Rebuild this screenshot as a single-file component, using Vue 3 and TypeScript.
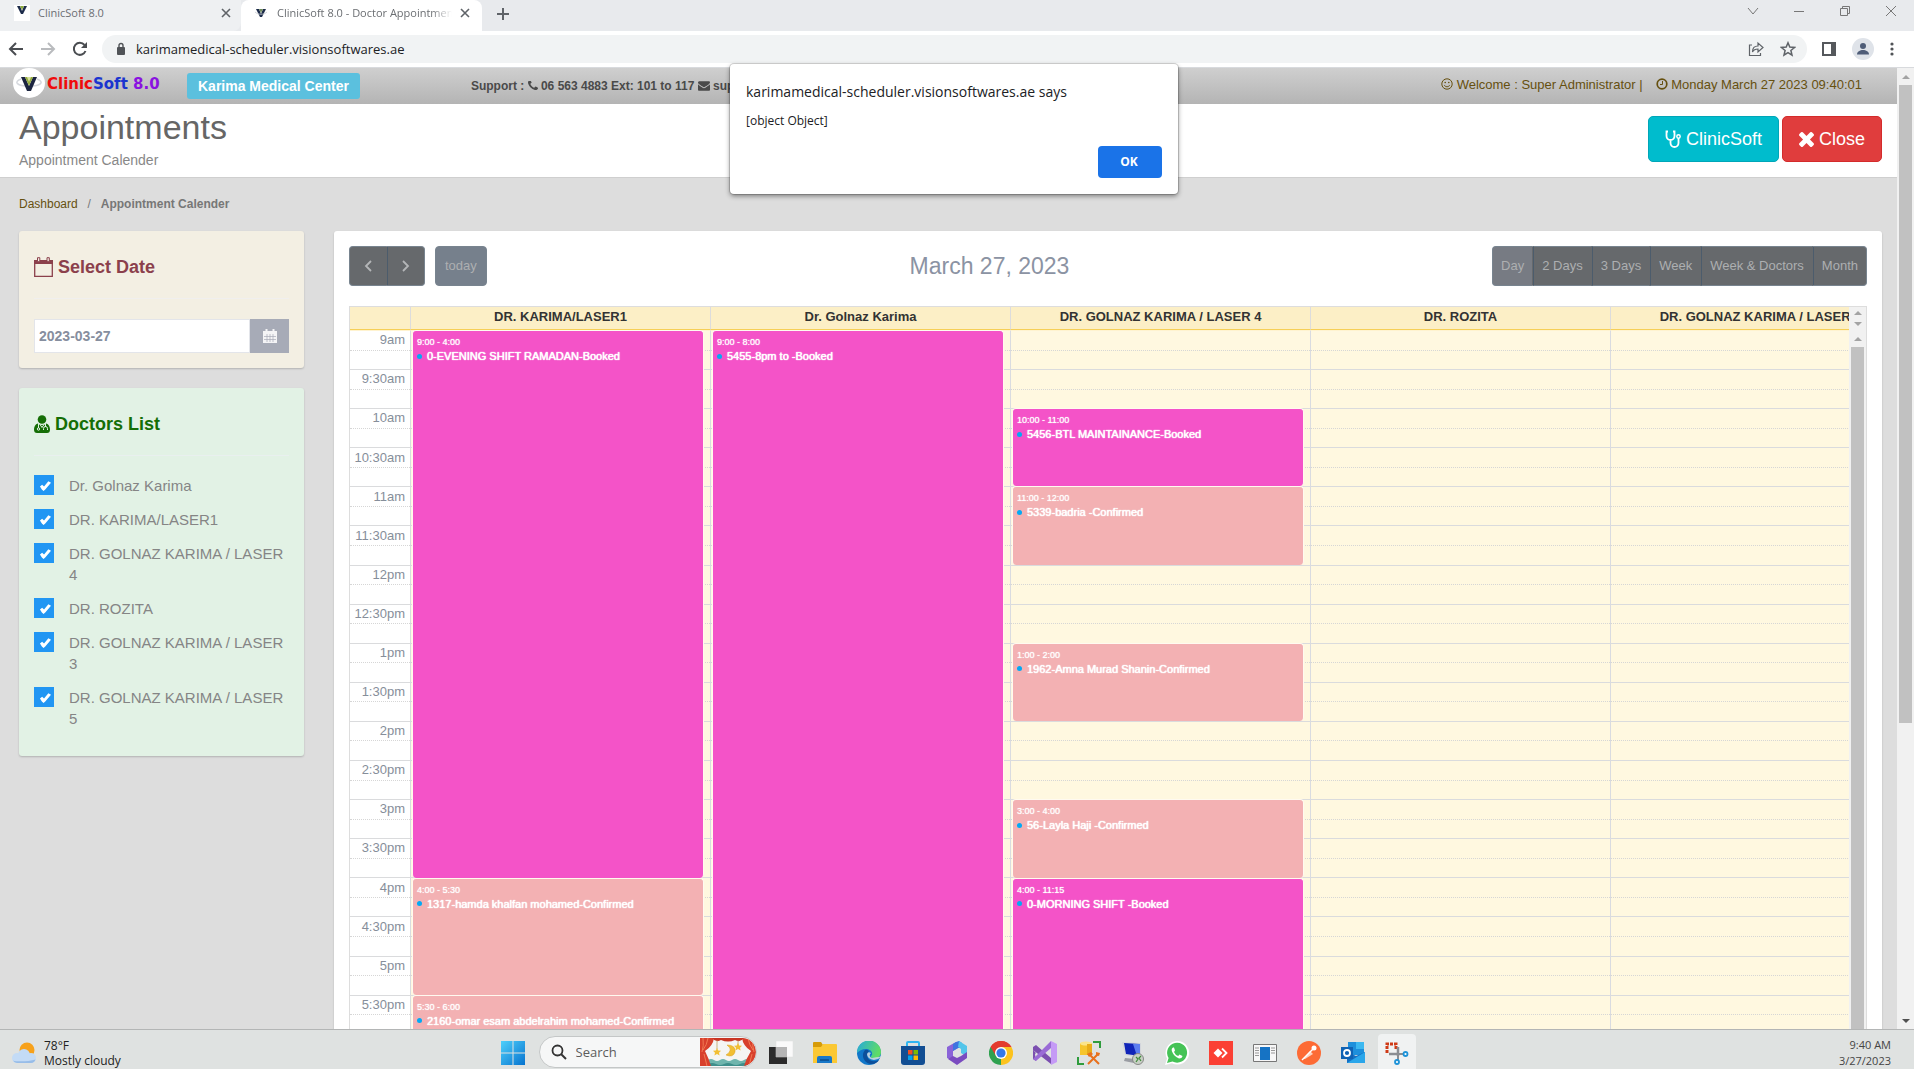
<script setup lang="ts">
import { ref } from 'vue'

interface Appointment {
  start: number
  end: number
  time: string
  title: string
  status: 'booked' | 'confirmed'
}
interface Resource {
  name: string
  items: Appointment[]
}

const DAY_START = 9 * 60
const DAY_LENGTH = 9 * 60

const resources: Resource[] = [
  {
    name: 'DR. KARIMA/LASER1',
    items: [
      { start: 540, end: 960, time: '9:00 - 4:00', title: '0-EVENING SHIFT RAMADAN-Booked', status: 'booked' },
      { start: 960, end: 1050, time: '4:00 - 5:30', title: '1317-hamda khalfan mohamed-Confirmed', status: 'confirmed' },
      { start: 1050, end: 1080, time: '5:30 - 6:00', title: '2160-omar esam abdelrahim mohamed-Confirmed', status: 'confirmed' },
    ],
  },
  {
    name: 'Dr. Golnaz Karima',
    items: [{ start: 540, end: 1200, time: '9:00 - 8:00', title: '5455-8pm to -Booked', status: 'booked' }],
  },
  {
    name: 'DR. GOLNAZ KARIMA / LASER 4',
    items: [
      { start: 600, end: 660, time: '10:00 - 11:00', title: '5456-BTL MAINTAINANCE-Booked', status: 'booked' },
      { start: 660, end: 720, time: '11:00 - 12:00', title: '5339-badria -Confirmed', status: 'confirmed' },
      { start: 780, end: 840, time: '1:00 - 2:00', title: '1962-Amna Murad Shanin-Confirmed', status: 'confirmed' },
      { start: 900, end: 960, time: '3:00 - 4:00', title: '56-Layla Haji -Confirmed', status: 'confirmed' },
      { start: 960, end: 1395, time: '4:00 - 11:15', title: '0-MORNING SHIFT -Booked', status: 'booked' },
    ],
  },
  { name: 'DR. ROZITA', items: [] },
  { name: 'DR. GOLNAZ KARIMA / LASER 3', items: [] },
]

const slots: string[] = []
for (let m = DAY_START; m < DAY_START + DAY_LENGTH; m += 30) {
  const h = Math.floor(m / 60)
  const label = (h > 12 ? h - 12 : h) + (m % 60 ? ':30' : '') + (h < 12 ? 'am' : 'pm')
  slots.push(label, '')
}

function place(a: Appointment) {
  return {
    top: ((a.start - DAY_START) / DAY_LENGTH) * 100 + '%',
    height: ((a.end - a.start) / DAY_LENGTH) * 100 + '%',
  }
}

const doctors = ref([
  { name: 'Dr. Golnaz Karima', on: true },
  { name: 'DR. KARIMA/LASER1', on: true },
  { name: 'DR. GOLNAZ KARIMA / LASER 4', on: true },
  { name: 'DR. ROZITA', on: true },
  { name: 'DR. GOLNAZ KARIMA / LASER 3', on: true },
  { name: 'DR. GOLNAZ KARIMA / LASER 5', on: true },
])
const date = ref('2023-03-27')
const views = ['Day', '2 Days', '3 Days', 'Week', 'Week & Doctors', 'Month']
const view = ref('Day')
</script>

<template>
  <div class="screen">
    <nav class="tabs" aria-label="Browser tabs">
      <div class="tab first">
        <svg class="fav boxed" viewBox="0 0 16 16"><path d="M3 1h3l2 5 2-5h3L9 9H7z" fill="#1c2b4a" /><path d="M6 1h4L8 5z" fill="#8aa83c" /></svg>
        <span class="tab-title">ClinicSoft 8.0</span>
        <button class="bare" aria-label="Close tab"><svg width="10" height="10" viewBox="0 0 10 10"><path d="M1 1l8 8M9 1L1 9" stroke="#5f6368" stroke-width="1.6" /></svg></button>
      </div>
      <div class="tab active">
        <svg class="fav" viewBox="0 0 16 16"><path d="M3 4h3l2 5 2-5h3l-4 8H7z" fill="#1c2b4a" /><path d="M6 4h4L8 8z" fill="#6f8a5c" /><path d="M2 7c3 3 9 3 12 0" fill="none" stroke="#c8ccd2" stroke-width=".8" /></svg>
        <span class="tab-title fade">ClinicSoft 8.0 - Doctor Appointment</span>
        <button class="bare" aria-label="Close tab"><svg width="10" height="10" viewBox="0 0 10 10"><path d="M1 1l8 8M9 1L1 9" stroke="#5f6368" stroke-width="1.6" /></svg></button>
      </div>
      <button class="bare plus" aria-label="New tab"><svg width="12" height="12" viewBox="0 0 12 12"><path d="M6 0v12M0 6h12" stroke="#5f6368" stroke-width="2" /></svg></button>
      <div class="win">
        <button class="bare" aria-label="Search tabs"><svg width="12" height="12" viewBox="0 0 12 12"><path d="M1 3l5 6 5-6" fill="none" stroke="#777" /></svg></button>
        <button class="bare" aria-label="Minimize"><svg width="12" height="12" viewBox="0 0 12 12"><path d="M1 6.500h10" stroke="#777" /></svg></button>
        <button class="bare" aria-label="Restore"><svg width="12" height="12" viewBox="0 0 12 12"><path d="M1.500 3.500h7v7h-7zM3.500 3V1.500h7v7H9" fill="none" stroke="#777" /></svg></button>
        <button class="bare" aria-label="Close window"><svg width="12" height="12" viewBox="0 0 12 12"><path d="M1 1l10 10M11 1L1 11" stroke="#777" /></svg></button>
      </div>
    </nav>

    <div class="toolbar">
      <button class="bare" aria-label="Back"><svg width="16" height="16" viewBox="0 0 16 16"><path d="M15 8H2M8 2L2 8l6 6" fill="none" stroke="#4a4d51" stroke-width="2" /></svg></button>
      <button class="bare" aria-label="Forward"><svg width="16" height="16" viewBox="0 0 16 16"><path d="M1 8h13M8 2l6 6-6 6" fill="none" stroke="#b9bbbe" stroke-width="2" /></svg></button>
      <button class="bare" aria-label="Reload"><svg width="16" height="16" viewBox="0 0 16 16"><path d="M13.500 10A6 6 0 1 1 12.500 4" fill="none" stroke="#4a4d51" stroke-width="2" /><path d="M15 1v6H9z" fill="#4a4d51" /></svg></button>
      <div class="omnibox">
        <svg width="10" height="14" viewBox="0 0 10 14"><rect x="1" y="5" width="8" height="8" rx="1" fill="#505357" /><path d="M3 5V3.500a2 2 0 0 1 4 0V5" fill="none" stroke="#505357" stroke-width="1.400" /></svg>
        <input class="url" value="karimamedical-scheduler.visionsoftwares.ae" aria-label="Address" />
        <button class="bare" aria-label="Share"><svg width="16" height="16" viewBox="0 0 16 16"><path d="M4 4H1.500v10.500h11V12" fill="none" stroke="#5f6368" stroke-width="1.200" /><path d="M4.500 11c0-4 2-6 5.500-6V2l5 4.500-5 4.500V8c-3 0-4.500 1-5.500 3z" fill="none" stroke="#5f6368" stroke-width="1.200" /></svg></button>
        <button class="bare" aria-label="Bookmark"><svg width="16" height="16" viewBox="0 0 16 16"><path d="M8 1.800l1.800 4.300 4.700.4-3.600 3 1.100 4.600L8 11.600l-4 2.500 1.100-4.600-3.600-3 4.700-.4z" fill="none" stroke="#5f6368" stroke-width="1.500" /></svg></button>
      </div>
      <button class="bare" aria-label="Side panel"><svg width="14" height="14" viewBox="0 0 14 14"><path d="M1 1h12v12H1z" fill="none" stroke="#55585c" stroke-width="2" /><path d="M9 1h4v12H9z" fill="#55585c" /></svg></button>
      <button class="bare" aria-label="Profile"><svg width="22" height="22" viewBox="0 0 22 22"><circle cx="11" cy="11" r="11" fill="#dfe3e9" /><circle cx="11" cy="8" r="3" fill="#4f5d78" /><path d="M5 16.500c0-6 12-6 12 0z" fill="#4f5d78" /></svg></button>
      <button class="bare" aria-label="Menu"><svg width="4" height="14" viewBox="0 0 4 14"><circle cx="2" cy="2" r="1.600" fill="#505357" /><circle cx="2" cy="7" r="1.600" fill="#505357" /><circle cx="2" cy="12" r="1.600" fill="#505357" /></svg></button>
    </div>

    <div class="viewport">
      <main class="page">
        <header class="topbar">
          <svg class="logo" width="32" height="30" viewBox="0 0 32 30"><ellipse cx="16" cy="15" rx="16" ry="15" fill="#fff" /><path d="M8 11c-8 3-4 7 8 7s16-4 8-7" fill="none" stroke="#d5d8dd" stroke-width="1.500" /><path d="M8 9h4l4 9 4-9h4l-6 14h-4z" fill="#1b2440" /><path d="M12 9h8l-4 9z" fill="#94ab3d" /><path d="M14 9h4l-2 5z" fill="#d9e3a0" /></svg>
          <span class="brand"><b class="c1">Clinic</b><b class="c2">Soft</b> <b class="c3">8.0</b></span>
          <span class="badge">Karima Medical Center</span>
          <span class="support">Support :
            <svg width="10" height="10" viewBox="192 256 1408 1408"><path fill="currentColor" d="M1600 1240q0 27-10 70.500t-21 68.500q-21 50-122 106-94 51-186 51-27 0-53-3.500t-57.500-12.500-47-14.500-55.500-20.500-49-18q-98-35-175-83-127-79-264-216t-216-264q-48-77-83-175-3-9-18-49t-20.500-55.500-14.500-47-12.500-57.500-3.500-53q0-92 51-186 56-101 106-122 25-11 68.500-21t70.500-10q14 0 21 3 18 6 53 76 11 19 30 54t35 63.500 31 53.500q3 4 17.500 25t21.500 35.500 7 28.500q0 20-28.500 50t-62 55-62 53-28.500 46q0 9 5 22.500t8.500 20.500 14 24 11.500 19q76 137 174 235t235 174q2 1 19 11.500t24 14 20.500 8.500 22.500 5q18 0 46-28.500t53-62 55-62 50-28.500q14 0 28.500 7t35.500 21.500 25 17.500q25 15 53.500 31t63.500 35 54 30q70 35 76 53 3 7 3 21z" /></svg>
            06 563 4883 Ext: 101 to 117
            <svg width="12" height="10" viewBox="0 256 1792 1408"><path fill="currentColor" d="M1792 710v794q0 66-47 113t-113 47h-1472q-66 0-113-47t-47-113v-794q44 49 101 87 362 246 497 345 57 42 92.500 65.500t94.500 48 110 24.500h2q51 0 110-24.500t94.500-48 92.500-65.500q170-123 498-345 57-39 100-87zm0-294q0 79-49 151t-122 123q-376 261-468 325-10 7-42.500 31t-54 38.500-52 32.500-57.500 27-50 9h-2q-23 0-50-9t-57.500-27-52-32.500-54-38.500-42.500-31q-91-64-262-182.500t-205-142.500q-62-42-117-115.500t-55-136.500q0-78 41.500-130t118.500-52h1472q65 0 112.500 47t47.500 113z" /></svg>
            support</span>
          <span class="who">
            <svg width="12" height="12" viewBox="0 0 12 12"><circle cx="6" cy="6" r="5.200" fill="none" stroke="currentColor" /><circle cx="4.200" cy="4.500" r=".8" fill="currentColor" /><circle cx="7.800" cy="4.500" r=".8" fill="currentColor" /><path d="M3.300 7.200c1 2 4.400 2 5.400 0" fill="none" stroke="currentColor" /></svg>
            Welcome : Super Administrator |</span>
          <span class="who">
            <svg width="12" height="12" viewBox="0 0 12 12"><circle cx="6" cy="6" r="4.800" fill="none" stroke="currentColor" stroke-width="1.700" /><path d="M6.500 3v3.500H4" fill="none" stroke="currentColor" /></svg>
            Monday March 27 2023 09:40:01</span>
        </header>

        <section class="title">
          <div>
            <h1>Appointments</h1>
            <p>Appointment Calender</p>
          </div>
          <div class="actions">
            <button class="big teal">
              <svg width="16" height="18" viewBox="0 0 16 18"><path d="M3 1.500H1.500V6a4 4 0 0 0 8 0V1.500H8M5.500 10v3a4 4 0 0 0 8 0V8" fill="none" stroke="#fff" stroke-width="1.800" /><circle cx="13.500" cy="6.500" r="1.700" fill="none" stroke="#fff" stroke-width="1.500" /></svg>
              ClinicSoft
            </button>
            <button class="big red">
              <svg width="15" height="15" viewBox="302 366 1188 1188"><path fill="#fff" d="M1490 1322q0 40-28 68l-136 136q-28 28-68 28t-68-28l-294-294-294 294q-28 28-68 28t-68-28l-136-136q-28-28-28-68t28-68l294-294-294-294q-28-28-28-68t28-68l136-136q28-28 68-28t68 28l294 294 294-294q28-28 68-28t68 28l136 136q28 28 28 68t-28 68l-294 294 294 294q28 28 28 68z" /></svg>
              Close
            </button>
          </div>
        </section>

        <nav class="crumbs" aria-label="Breadcrumb"><a href="#">Dashboard</a><span class="sep">/</span><b>Appointment Calender</b></nav>

        <div class="columns">
          <aside class="side">
            <section class="card date">
              <h2>
                <svg width="19" height="20" viewBox="0 0 19 20"><path d="M.7 4h17.600v15.300H.7z" fill="none" stroke="currentColor" stroke-width="1.300" /><path d="M0 3h19v4H0z" fill="currentColor" /><path d="M3.500.7h2.300v4H3.500zM13 .7h2.300v4H13z" fill="#f3efe3" stroke="currentColor" /></svg>
                <label for="day">Select Date</label>
              </h2>
              <hr />
              <div class="picker">
                <input id="day" v-model="date" />
                <button aria-label="Open calendar">
                  <svg width="14" height="14" viewBox="0 0 14 14"><path d="M0 2h14v12H0zM2.500 0h2v3h-2zM9.500 0h2v3h-2z" fill="#f4f4f6" /><path d="M1 7.500h12M1 10.500h12M4 5v8M7 5v8M10 5v8" stroke="#a7abb7" stroke-width=".7" /></svg>
                </button>
              </div>
            </section>
            <section class="card docs">
              <h2>
                <svg width="16" height="18" viewBox="0 0 16 18"><circle cx="8" cy="4.500" r="4.300" fill="currentColor" /><path d="M3.500 8.500C1 9.500 0 12 0 14.500 0 17 1 18 3 18h10c2 0 3-1 3-3.500 0-2.500-1-5-3.500-6-3 2-6 2-9 0z" fill="currentColor" /><path d="M4.500 9v4M11.500 9v3M9.500 15v-1.500a2 2 0 0 1 4 0V15M6 9.500l2 3 2-3" fill="none" stroke="#e2f2e5" /><circle cx="4.500" cy="14" r="1.200" fill="none" stroke="#e2f2e5" /></svg>
                Doctors List
              </h2>
              <hr />
              <ul>
                <li v-for="d in doctors" :key="d.name">
                  <label><input type="checkbox" v-model="d.on" /><span>{{ d.name }}</span></label>
                </li>
              </ul>
            </section>
          </aside>

          <section class="card cal">
            <div class="calbar">
              <div class="left">
                <div class="group">
                  <button aria-label="Previous"><svg width="8" height="12" viewBox="0 0 8 12"><path d="M7 1L2 6l5 5" fill="none" stroke="#b4b6b8" stroke-width="1.800" /></svg></button>
                  <button aria-label="Next"><svg width="8" height="12" viewBox="0 0 8 12"><path d="M1 1l5 5-5 5" fill="none" stroke="#b4b6b8" stroke-width="1.800" /></svg></button>
                </div>
                <button class="today">today</button>
              </div>
              <h2>March 27, 2023</h2>
              <div class="group views">
                <button v-for="v in views" :key="v" :class="{ on: v === view }" @click="view = v">{{ v }}</button>
              </div>
            </div>

            <div class="grid">
              <div class="headrow">
                <div class="clip">
                  <table class="sheet head">
                    <colgroup><col class="axis-col" /><col v-for="r in resources" :key="r.name" class="res-col" /></colgroup>
                    <thead><tr><th></th><th v-for="r in resources" :key="r.name" scope="col">{{ r.name }}</th></tr></thead>
                  </table>
                </div>
                <div class="bar mini"><i class="up"></i><i class="down"></i></div>
              </div>
              <div class="bodyrow">
                <div class="clip">
                  <table class="sheet body">
                    <colgroup><col class="axis-col" /><col v-for="r in resources" :key="r.name" class="res-col" /></colgroup>
                    <tbody>
                      <tr v-for="(s, i) in slots" :key="i" :class="{ minor: !s }">
                        <th class="axis" scope="row"><span>{{ s }}</span></th>
                        <td v-for="r in resources" :key="r.name"></td>
                      </tr>
                    </tbody>
                  </table>
                  <div class="events">
                    <div v-for="r in resources" :key="r.name" class="lane">
                      <article v-for="a in r.items" :key="a.title" class="event" :class="a.status" :style="place(a)">
                        <time>{{ a.time }}</time>
                        <p>{{ a.title }}</p>
                      </article>
                    </div>
                  </div>
                </div>
                <div class="bar"><i class="up"></i><div class="thumb"></div></div>
              </div>
            </div>
          </section>
        </div>
      </main>
      <div class="bar outer"><i class="up"></i><div class="thumb"></div><i class="down dark"></i></div>
    </div>

    <footer class="taskbar">
      <button class="weather">
        <svg width="28" height="22" viewBox="0 0 28 22"><circle cx="15" cy="8" r="7.500" fill="#f7a11a" /><g fill="#c3dbf6"><circle cx="5" cy="16" r="5" /><circle cx="12" cy="13" r="6" /><circle cx="19" cy="16" r="5" /><path d="M5 13h14v8H5z" /></g><path d="M1 18.500c4 1.500 16 1 22.500-1A5 5 0 0 1 19 21H5a5 5 0 0 1-4-2.500z" fill="#98bde8" /></svg>
        <span>78°F<br />Mostly cloudy</span>
      </button>
      <div class="apps">
        <button class="app" aria-label="Start"><svg viewBox="0 0 24 24"><defs><linearGradient id="w" x1="0" y1="0" x2="1" y2="1"><stop offset="0" stop-color="#4fd0fb" /><stop offset="1" stop-color="#0673cf" /></linearGradient></defs><path d="M0 0h11.500v11.500H0zM12.500 0H24v11.500H12.500zM0 12.500h11.500V24H0zM12.500 12.500H24V24H12.500z" fill="url(#w)" /></svg></button>
        <div class="search">
          <svg width="16" height="16" viewBox="0 0 16 16"><circle cx="6.500" cy="6.500" r="5" fill="none" stroke="#333" stroke-width="1.800" /><path d="M10 10l5 5" stroke="#333" stroke-width="2" /></svg>
          <input placeholder="Search" aria-label="Search" />
          <svg class="art" width="56" height="28" viewBox="0 0 56 28"><path d="M0 0h56v28H0z" fill="#f5f5f3" /><path d="M8 28V22q3-2 6 0t6 0 6 0 6 0 6 0 6 0 4 0v6z" fill="#6fb5ad" /><path d="M8 28v-2q4-2 8 0t8 0 8 0 8 0 8 0v2z" fill="#3f8f8b" /><path d="M0 0h14q-1 8-9 13 4 8 6 15H0z" fill="#d8402c" /><path d="M56 0H42q1 8 9 13-5 8-7 15h12z" fill="#d8402c" /><path d="M12 0h32q-4 5-9 2-7 3-14 0-5 3-9-2z" fill="#c93524" /><path d="M3 0q1 8-1 14M8 0Q7 7 3 12M4 16l3 12M53 0q-1 8 1 14M48 0q1 7 5 12M52 16l-3 12" stroke="#f07a54" fill="none" /><path d="M27 7q7 5-1 10 7 3 9-3 1-7-8-7z" fill="#f2bf33" stroke="#d99e22" stroke-width=".5" /><path d="M17 2v9M38 2v5" stroke="#b99a50" stroke-width=".7" /><path d="M17 10l1.200 2.500 2.800.3-2 1.900.6 2.800-2.600-1.400-2.600 1.400.6-2.800-2-1.900 2.800-.3zM38 5l1.200 2.500 2.800.3-2 1.900.6 2.800-2.600-1.400-2.600 1.400.6-2.800-2-1.900 2.800-.3z" fill="#f2bf33" /></svg>
        </div>
        <button class="app" aria-label="Task view"><svg viewBox="0 0 24 24"><path d="M0 6h18v17H0z" fill="#2b2b2b" /><path d="M7 0h17v16H7z" fill="#fafafa" stroke="#ddd" stroke-width=".5" /><path d="M7 6h11v10H7z" fill="#b5b5b5" /></svg></button>
        <button class="app" aria-label="File Explorer"><svg viewBox="0 0 24 24"><path d="M0 2q0-1 1-1h7l2 3v3H0z" fill="#d69b08" /><path d="M0 6h8l2-3h13q1 0 1 1v18H0z" fill="#fbc834" /><path d="M4 22v-5q0-2 2-2h11q2 0 2 2v5z" fill="#1878c8" /><path d="M7 19h9" stroke="#0a4c8c" stroke-width="1.500" /></svg></button>
        <button class="app" aria-label="Edge"><svg viewBox="0 0 24 24"><defs><linearGradient id="e" x1="0" y1="0" x2="1" y2=".3"><stop offset="0" stop-color="#26a9dd" /><stop offset="1" stop-color="#5fdc66" /></linearGradient></defs><circle cx="12" cy="12" r="12" fill="#1177c9" /><path d="M0 12a12 12 0 0 1 24-1c0 5-4 7-9 6-2-1-1-2 0-3 1-4-3-6-6-6-4 0-7 2-9 4z" fill="url(#e)" /><path d="M8 9c-5 6 0 14 7 14 3 0 6-2 7-4-9 4-15-3-10-9q-2-2-4-1z" fill="#0c4f9b" /><path d="M15 17q-4-2-1-5-3-2-4 1 0 5 7 6 4 0 7-3l0 2h3v-3z" fill="#e1e4e3" opacity=".8" /></svg></button>
        <button class="app" aria-label="Store"><svg viewBox="0 0 24 24"><path d="M6 6V2q0-1 1-1h10q1 0 1 1v4" fill="none" stroke="#2fb5f1" stroke-width="2" /><path d="M0 5h24v16q0 3-3 3H3q-3 0-3-3z" fill="#124e93" /><path d="M7 9h4.500v4.500H7z" fill="#f25022" /><path d="M12.500 9H17v4.500h-4.500z" fill="#7fba00" /><path d="M7 14.500h4.500V19H7z" fill="#00a4ef" /><path d="M12.500 14.500H17V19h-4.500z" fill="#ffb900" /></svg></button>
        <button class="app" aria-label="Microsoft 365"><svg viewBox="0 0 24 24"><path d="M11 1L2 6v11l6 3V10l5-3z" fill="#8a63d8" /><path d="M11 1l3-1 3 2v5l-4 0-5 3V3z" fill="#3f74e0" /><path d="M14 0l8 5v11l-6-4V8l-3-2z" fill="#53c5ea" /><path d="M22 11v6l-10 7-9-6 5-3 4 2 4-2z" fill="#7a4cc0" /></svg></button>
        <button class="app" aria-label="Chrome"><svg viewBox="0 0 24 24"><path d="M12 12L1.600 6a12 12 0 0 1 20.800 0z" fill="#e33b2e" /><path d="M12 12l10.400-6A12 12 0 0 1 12 24z" fill="#fcc31e" /><path d="M12 12v12A12 12 0 0 1 1.600 6z" fill="#2ea14f" /><path d="M12 6h10.400L17 15l-5 9z" fill="#fcc31e" /><path d="M7 15L1.600 6H12z" fill="#2ea14f" /><path d="M12 6h10.400A12 12 0 0 0 1.600 6L7 15z" fill="#e33b2e" /><circle cx="12" cy="12" r="6" fill="#fff" /><circle cx="12" cy="12" r="4.600" fill="#3478e8" /></svg></button>
        <button class="app" aria-label="Visual Studio"><svg viewBox="0 0 24 24"><path d="M0 6l3-2 15 13v6L0 9zM0 18V9l3 3-1 1 1 7z" fill="#7b4fb0" /><path d="M0 18l18-18v7L3 20z" fill="#9a6bd6" /><path d="M18 0l6 3v18l-6 3z" fill="#c59bf6" /></svg></button>
        <button class="app" aria-label="SQL tools"><svg viewBox="0 0 24 24"><path d="M16 1h7v6M1 16v7h6" fill="none" stroke="#2e9c3c" stroke-width="2" /><path d="M3 2h12v12H3z" fill="#f6c52c" /><ellipse cx="9" cy="2.500" rx="6" ry="2" fill="#fbe48a" /><path d="M10 3h5v11h-5z" fill="#e8ac18" /><path d="M12 13l10 10M21 13L11 23" stroke="#e8711c" stroke-width="2" /><path d="M10 13l4-2 2 2-4 3zM19 11l4 1-1 3-3-1z" fill="#e8711c" /></svg></button>
        <button class="app" aria-label="Remote desktop"><svg viewBox="0 0 24 24"><path d="M1 1l19 1v15L4 14z" fill="#d3d6dc" /><path d="M3 2l16 1v12L5 13z" fill="#1024b8" /><path d="M12 3l7 0v12l-4-3z" fill="#5c7df0" /><path d="M4 17l10 1-1 4-10-2z" fill="#9a9da3" /><circle cx="17" cy="18" r="5.500" fill="#c7d0c4" stroke="#888" /><path d="M15 16l2 2-2 3M20 15l-2 2 2 3" fill="none" stroke="#3f8a3a" stroke-width="1.200" /></svg></button>
        <button class="app" aria-label="WhatsApp"><svg viewBox="0 0 24 24"><path d="M0 24l2-6.500A11.800 11.800 0 1 1 7 22.300z" fill="#fff" /><path d="M2 22l1.600-5A10 10 0 1 1 7.500 20.600z" fill="#45c356" /><path d="M8 6.500q-2 1-1 4 2 5 7 7 3 0 3.500-2.500l-3-1.500-1.300 1.500q-3-1-4.200-4L10 9.500 9 6.500z" fill="#fff" /></svg></button>
        <button class="app" aria-label="AnyDesk"><svg viewBox="0 0 24 24"><path d="M0 0h24v24H0z" fill="#fb4034" /><path d="M9 7.500l4.500 4.500L9 16.500 4.500 12z" fill="#fff" /><path d="M13 7.500l4.500 4.500-4.500 4.500" fill="none" stroke="#fff" stroke-width="1.800" /></svg></button>
        <button class="app" aria-label="Viewer"><svg viewBox="0 0 24 24"><path d="M.5 3.500h23v17H.5z" fill="#f7f7f7" stroke="#777" /><path d="M7 6h10v13H7z" fill="#1673c4" /><path d="M2 7h4M2 9.500h4M2 12h4M18 7h4M18 9.500h4M18 12h4M2 14.500h4" stroke="#999" /></svg></button>
        <button class="app" aria-label="Postman"><svg viewBox="0 0 24 24"><circle cx="12" cy="12" r="12" fill="#fd6b35" /><path d="M6 18l7-8 3 3-8 5z" fill="#fdd3c0" /><circle cx="17" cy="7" r="2.500" fill="#fff" /><path d="M5 19l11-11" stroke="#fff" stroke-width="1.500" /></svg></button>
        <button class="app" aria-label="Outlook"><svg viewBox="0 0 24 24"><path d="M7 1h16v13H7z" fill="#1d8fdc" /><path d="M15 1h8v7h-8z" fill="#3cb8f0" /><path d="M6 11l9 4 9-4v11H6z" fill="#1370c4" /><path d="M6 22l18-11v11z" fill="#2aa6ea" /><path d="M0 6h12v12H0z" fill="#0f62b4" /><circle cx="6" cy="12" r="3" fill="none" stroke="#fff" stroke-width="1.800" /></svg></button>
        <button class="app current" aria-label="Snipping Tool"><svg viewBox="0 0 24 24"><path d="M2 12V3h9v6" fill="none" stroke="#cf3a16" stroke-width="3" stroke-dasharray="3 1" /><path d="M4 13h10M13 6v9" stroke="#8b8e92" stroke-width="2.500" fill="none" /><path d="M13 15v4M14 13h5" stroke="#8b8e92" stroke-width="2" /><circle cx="12" cy="21" r="2" fill="#fff" stroke="#1e93d8" stroke-width="1.800" /><circle cx="20.500" cy="13" r="2" fill="#fff" stroke="#1e93d8" stroke-width="1.800" /></svg></button>
      </div>
      <div class="clock">9:40 AM<br />3/27/2023</div>
    </footer>

    <div class="dialog" role="alertdialog" aria-labelledby="dlg">
      <h3 id="dlg">karimamedical-scheduler.visionsoftwares.ae says</h3>
      <p>[object Object]</p>
      <button>OK</button>
    </div>
  </div>
</template>

<style>
html,
body {
  margin: 0;
  overflow: hidden;
}
</style>

<style scoped>
* {
  box-sizing: border-box;
}
.screen {
  position: relative;
  display: flex;
  flex-direction: column;
  height: 100vh;
  overflow: hidden;
  font-family: 'Liberation Sans', Arial, sans-serif;
  background: #ddd;
}
button,
input {
  font-family: inherit;
}
svg {
  flex: none;
}
h1,
h2,
h3,
p,
ul {
  margin: 0;
  padding: 0;
  font-weight: normal;
}
.bare {
  display: flex;
  padding: 0;
  border: 0;
  background: none;
}

/* browser frame */
.tabs {
  display: flex;
  align-items: center;
  height: 31px;
  flex: none;
  padding-right: 17px;
  background: #e8eaed;
  font-family: 'Open Sans', 'Noto Sans', sans-serif;
}
.tab {
  display: flex;
  align-items: center;
  gap: 8px;
  width: 241px;
  height: 31px;
  padding: 0 10px 5px 14px;
  background: #eef0f2;
  border-radius: 0 0 8px 0;
}
.tab.active {
  background: #fff;
  border-radius: 8px 8px 0 0;
  padding: 0 12px 5px;
}
.fav {
  width: 16px;
  height: 16px;
}
.boxed {
  background: #fff;
}
.tab-title {
  flex: 1;
  overflow: hidden;
  white-space: nowrap;
  font-size: 11px;
  line-height: 16px;
  color: #6b6e72;
}
.fade {
  mask-image: linear-gradient(90deg, #000 88%, transparent);
}
.plus {
  margin: 0 0 3px 15px;
}
.win {
  display: flex;
  gap: 34px;
  margin: 0 0 9px auto;
}
.toolbar {
  display: flex;
  align-items: center;
  height: 37px;
  flex: none;
  gap: 16px;
  padding: 0 20px 1px 8px;
  background: #fff;
  border-bottom: 1px solid #d8dadd;
}
.omnibox {
  display: flex;
  flex: 1;
  align-items: center;
  gap: 16px;
  height: 28px;
  margin: 0 -1px 0 -2px;
  padding: 0 11px 0 14px;
  border-radius: 14px;
  background: #f1f3f4;
}
.url {
  flex: 1;
  margin-left: -6px;
  padding: 0;
  border: 0;
  background: none;
  font-family: 'Open Sans', 'Noto Sans', sans-serif;
  font-size: 13px;
  color: #202124;
}

/* web page */
.viewport {
  display: flex;
  flex: 1;
  min-height: 0;
}
.page {
  flex: 1;
  min-width: 0;
  overflow: hidden;
}
.topbar {
  display: flex;
  align-items: center;
  height: 36px;
  padding: 0 35px 0 13px;
  background: linear-gradient(#cfcfcf, #b4b4b4);
}
.logo {
  align-self: flex-start;
}
.brand {
  width: 142px;
  padding-left: 2px;
  font: bold 15px 'DejaVu Sans', Verdana, sans-serif;
  line-height: 32px;
  white-space: nowrap;
  align-self: flex-start;
}
.c1 {
  color: #f00b0b;
}
.c2 {
  color: #1b35cf;
}
.c3 {
  color: #8a12e0;
}
.badge {
  padding: 0 11px;
  border-radius: 3px;
  background: #5bc0de;
  color: #fff;
  font-size: 14px;
  font-weight: bold;
  line-height: 26px;
}
.support {
  margin-left: 111px;
  font-size: 12px;
  font-weight: bold;
  color: #4a4a4a;
  white-space: nowrap;
}
.support svg {
  vertical-align: -1px;
}
.who {
  margin-left: 13px;
  font-size: 13px;
  line-height: 34px;
  align-self: flex-start;
  color: #66500f;
  white-space: nowrap;
}
.support + .who {
  margin-left: auto;
}
.who svg {
  vertical-align: -1px;
}
.title {
  display: flex;
  justify-content: space-between;
  align-items: flex-start;
  height: 74px;
  padding: 0 15px 0 19px;
  background: #fff;
  border-bottom: 1px solid #cfcfcf;
}
h1 {
  padding-top: 3px;
  font-size: 34px;
  line-height: 40px;
  color: #666;
}
.title p {
  padding-top: 5px;
  font-size: 14px;
  line-height: 16px;
  color: #888;
}
.actions {
  display: flex;
  gap: 3px;
  padding-top: 12px;
}
.big {
  display: flex;
  align-items: center;
  gap: 5px;
  height: 46px;
  padding: 0 16px;
  border: 1px solid;
  border-radius: 5px;
  font-size: 18px;
  color: #fff;
}
.teal {
  background: #00bccd;
  border-color: #00a6b8;
}
.red {
  background: #e03d3d;
  border-color: #d42b2b;
}
.crumbs {
  display: flex;
  height: 53px;
  padding: 17px 19px 0;
  font-size: 12px;
  line-height: 18px;
  color: #777;
}
.crumbs a {
  color: #66500f;
  text-decoration: none;
}
.sep {
  width: 23px;
  text-align: center;
}
.columns {
  display: grid;
  grid-template-columns: 285px minmax(0, 1fr);
  gap: 30px;
  align-items: start;
  padding: 0 15px 0 19px;
}
.card {
  border-radius: 3px;
  padding: 15px;
  box-shadow: 0 1px 2px rgba(0, 0, 0, 0.2);
}
.side {
  display: grid;
  gap: 20px;
}
.side h2 {
  display: flex;
  align-items: center;
  gap: 5px;
  height: 42px;
  font-size: 18px;
  font-weight: bold;
}
.side hr {
  margin: 10px 0 20px;
  border: 0;
  border-top: 1px solid rgba(238, 238, 245, 0.6);
}
.date {
  background: #f3efe3;
  height: 137px;
}
.date h2 {
  color: #8b404c;
}
.docs {
  height: 368px;
  background: #e2f2e5;
}
.docs h2 {
  color: #156e06;
}
.picker {
  display: flex;
}
.picker input {
  flex: 1;
  min-width: 0;
  height: 34px;
  padding: 0 4px;
  border: 1px solid #e3e5ea;
  font-size: 14px;
  font-weight: bold;
  color: #868e9e;
}
.picker button {
  display: flex;
  align-items: center;
  justify-content: center;
  width: 39px;
  padding: 0;
  border: 0;
  background: #a7abb7;
}
.docs hr {
  margin-bottom: 19px;
}
.docs ul {
  display: grid;
  gap: 13px;
  list-style: none;
}
.docs label {
  display: flex;
  gap: 15px;
  font-size: 15px;
  line-height: 21px;
  color: #858585;
}
.docs input {
  appearance: none;
  flex: none;
  width: 20px;
  height: 20px;
  margin: 0;
  background: #fff;
}
.docs input:checked {
  background: #2196f3;
}
.docs input:checked::after {
  content: '';
  display: block;
  width: 12px;
  height: 10px;
  margin: 6px 0 0 5px;
  background: #fff;
  clip-path: polygon(8% 55%, 26% 38%, 42% 55%, 78% 2%, 100% 18%, 52% 84%, 38% 100%, 24% 84%);
}

/* calendar */
.cal {
  background: #fff;
}
.calbar {
  display: flex;
  justify-content: space-between;
  align-items: center;
  height: 40px;
}
.calbar h2 {
  font-size: 23px;
  color: #8b93a3;
}
.left,
.group {
  display: flex;
}
.left {
  gap: 10px;
}
.group button,
.today {
  display: flex;
  align-items: center;
  justify-content: center;
  height: 40px;
  padding: 0 8px 2px;
  border: 1px solid #78848f;
  background: #66696c;
  font-size: 13px;
  color: #adafb1;
}
.left .group button {
  padding-bottom: 0;
}
.group button {
  min-width: 38px;
}
.group button:not(:last-child) {
  border-right-color: #66696c;
}
.group button + button {
  border-left-color: #4c5c6c;
}
.group button:first-child {
  border-radius: 4px 0 0 4px;
}
.group button:last-child {
  border-radius: 0 4px 4px 0;
}
.group .on {
  background: #777b83;
}
.today {
  padding: 0 9px 2px;
  border-radius: 4px;
  background: #76808c;
}
.grid {
  margin-top: 20px;
  border: 1px solid #ddd;
  border-bottom: 0;
}
.headrow,
.bodyrow {
  display: flex;
}
.clip {
  position: relative;
  flex: 1;
  min-width: 0;
  overflow: hidden;
}
.sheet {
  table-layout: fixed;
  width: 1560px;
  border-spacing: 0;
}
.axis-col {
  width: 60px;
}
.res-col {
  width: 300px;
}
.head th {
  height: 23px;
  padding: 0 0 2px;
  background: #fcefc6;
  border-left: 1px solid #dcdcdc;
  border-bottom: 1px solid #f6cf57;
  font-size: 13px;
  line-height: 20px;
  color: #333;
}
.head th:first-child {
  border-left: 0;
}
.body {
  height: 704px;
}
.body th,
.body td {
  padding: 0;
  border-top: 1px solid #dadbdd;
}
.body tr:first-child > * {
  border-top-color: #fff3d0;
}
.body .minor > * {
  border-top: 1px dotted #d6d6d6;
}
.body td {
  background: #fff8e0;
  border-left: 1px solid #d9dbe0;
}
.axis {
  font-size: 13px;
  font-weight: normal;
  line-height: 18px;
  text-align: right;
  color: #868e9a;
}
.body .axis {
  padding-right: 5px;
}
.axis span {
  display: block;
  height: 18px;
}
.events {
  position: absolute;
  inset: 0 0 0 60px;
  display: flex;
}
.lane {
  position: relative;
  flex: 0 0 300px;
}
.event {
  position: absolute;
  left: 2px;
  right: 6px;
  padding: 5px 4px;
  overflow: hidden;
  border: 1px solid #fffaf0;
  border-bottom: 0;
  border-radius: 4px;
  color: #fff;
}
.booked {
  background: #f453c8;
}
.confirmed {
  background: #f3b1b3;
}
.event time {
  display: block;
  font-size: 9px;
  line-height: 12px;
  text-shadow: 0 0 1px #fff;
}
.event p {
  display: flex;
  align-items: center;
  gap: 5px;
  padding-top: 1px;
  font-size: 11px;
  line-height: 14px;
  white-space: nowrap;
  text-shadow: 0 0 1px #fff, 0 0 1px #fff;
}
.event p::before {
  content: '';
  width: 5px;
  height: 5px;
  border-radius: 50%;
  background: #03a9f4;
}

/* scroll bars */
.bar {
  display: flex;
  flex-direction: column;
  align-items: center;
  flex: none;
  width: 17px;
  background: #f1f1f1;
}
.bar i {
  width: 0;
  height: 0;
  margin: 7px 0 6px;
  border: solid transparent;
  border-width: 0 4px 4px;
  border-bottom-color: #a3a3a3;
}
.bar .down {
  border-width: 4px 4px 0;
  border-top-color: #a3a3a3;
}
.bar .dark {
  margin-top: auto;
  border-top-color: #505050;
}
.mini i {
  margin: 4px 0 3px;
}
.thumb {
  flex: 1;
  width: 13px;
  background: #c1c1c1;
}
.outer .thumb {
  flex: 0 1 638px;
}

/* task bar */
.taskbar {
  display: grid;
  grid-template-columns: 1fr auto 1fr;
  align-items: center;
  height: 40px;
  flex: none;
  border-top: 1px solid #b3b5b5;
  background: #dfe2e1;
  font-family: 'Open Sans', 'Noto Sans', sans-serif;
  font-size: 11px;
  line-height: 16px;
  color: #333;
}
.weather {
  display: flex;
  align-items: center;
  gap: 4px;
  padding: 6px 0 0 12px;
  border: 0;
  background: none;
  font-size: 12px;
  line-height: 15px;
  text-align: left;
  color: #222;
}
.apps {
  display: flex;
  align-items: flex-end;
  height: 39px;
  margin-right: 5px;
}
.app {
  width: 38px;
  height: 35px;
  margin: 0 3px;
  padding: 7px 7px 4px;
  border: 0;
  border-radius: 4px 4px 0 0;
  background: none;
}
.app svg {
  display: block;
  width: 24px;
  height: 24px;
}
.current {
  background: #f0f2f2;
}
.search {
  display: flex;
  align-items: center;
  width: 218px;
  height: 32px;
  margin: 0 2px 1px 4px;
  padding-left: 11px;
  gap: 9px;
  border: 1px solid #c4c7c7;
  border-radius: 16px;
  background: #f6f7f7;
  overflow: hidden;
}
.search input {
  flex: 1;
  min-width: 0;
  padding: 0;
  border: 0;
  background: none;
  font-size: 13px;
}
.search input::placeholder {
  color: #5c5c5c;
}
.art {
  border-radius: 0 14px 14px 0;
}
.clock {
  padding: 6px 23px 0 0;
  text-align: right;
  color: #444;
}

/* alert */
.dialog {
  position: absolute;
  top: 64px;
  left: 50%;
  display: flex;
  flex-direction: column;
  width: 448px;
  height: 130px;
  margin-left: -227px;
  padding: 18px 16px 16px;
  border-radius: 4px;
  background: #fff;
  box-shadow: 0 0 0 1px rgba(0, 0, 0, 0.15), 0 2px 5px rgba(0, 0, 0, 0.45);
  font-family: 'Open Sans', 'Noto Sans', sans-serif;
  color: #202124;
}
.dialog h3 {
  font-size: 14px;
  line-height: 20px;
}
.dialog p {
  padding-top: 9px;
  font-size: 12px;
  line-height: 20px;
}
.dialog button {
  align-self: flex-end;
  width: 64px;
  height: 32px;
  margin-top: auto;
  padding: 0 2px 2px 0;
  border: 0;
  border-radius: 4px;
  background: #1a73e8;
  color: #fff;
  font-size: 12px;
  font-weight: bold;
}
</style>
